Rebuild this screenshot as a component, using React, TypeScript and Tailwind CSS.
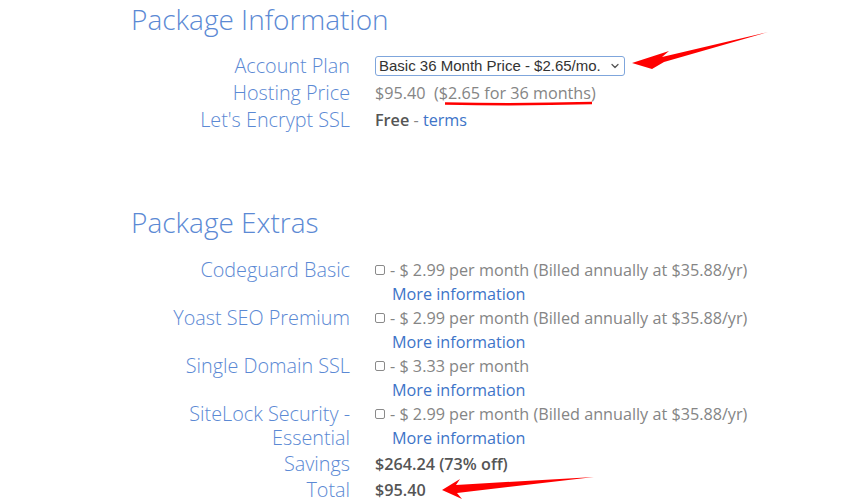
import { ChevronDown } from 'lucide-react';

const font = { fontFamily: '"Open Sans", "Noto Sans", sans-serif' };

type Extra = { label: string[]; price: string };

const extras: Extra[] = [
  { label: ['Codeguard Basic'], price: '- $ 2.99 per month (Billed annually at $35.88/yr)' },
  { label: ['Yoast SEO Premium'], price: '- $ 2.99 per month (Billed annually at $35.88/yr)' },
  { label: ['Single Domain SSL'], price: '- $ 3.33 per month' },
  { label: ['SiteLock Security -', 'Essential'], price: '- $ 2.99 per month (Billed annually at $35.88/yr)' },
];

function Label({ children, className = '' }: { children: React.ReactNode; className?: string }) {
  return (
    <div className={`text-right text-[19.8px] font-light leading-[24px] text-[#5b89d4] ${className}`}>{children}</div>
  );
}

function Checkbox() {
  return <span className="mr-[5px] inline-block h-[10px] w-[10px] rounded-[2px] border border-[#8a8a8a] align-[1px]" />;
}

export default function App() {
  return (
    <div className="relative h-[500px] w-[850px] overflow-hidden bg-white" style={font}>
      <h2 className="pl-[131px] pt-[1px] text-[28px] font-light leading-[36px] text-[#5b89d4]">Package Information</h2>

      <div className="mt-[17px] grid grid-cols-[350px_1fr] gap-x-[25px] gap-y-[3px]">
        <Label>Account Plan</Label>
        <div className="flex items-center">
          <div
            className="flex h-[20px] w-[250px] items-center justify-between gap-1 whitespace-nowrap rounded-[3px] border border-[#7fa6dc] pl-[3px] pr-[3px] text-[15px] text-[#333]"
            style={{ fontFamily: '"Liberation Sans", Arial, sans-serif' }}
          >
            <span>Basic 36 Month Price - $2.65/mo.</span>
            <ChevronDown size={12} strokeWidth={2.5} className="shrink-0 text-[#555]" />
          </div>
        </div>

        <Label>Hosting Price</Label>
        <div className="text-[16.2px] leading-[24px] text-[#858585]">
          $95.40&nbsp;&nbsp;($2.65 for 36 months)
        </div>

        <Label>Let's Encrypt SSL</Label>
        <div className="text-[16.2px] leading-[24px] text-[#858585]">
          <span className="font-semibold text-[#555]">Free</span> - <span className="text-[#3d74c8]">terms</span>
        </div>
      </div>

      <h2 className="mt-[72px] pl-[131px] text-[28px] font-light leading-[36px] text-[#5b89d4]">Package Extras</h2>

      <div className="mt-[18px] grid grid-cols-[350px_1fr] gap-x-[25px]">
        {extras.map((extra) => (
          <div key={extra.price + extra.label[0]} className="contents">
            <Label>
              {extra.label.map((line) => (
                <div key={line}>{line}</div>
              ))}
            </Label>
            <div className="text-[16.2px] leading-[24px] text-[#858585]">
              <div>
                <Checkbox />
                {extra.price}
              </div>
              <div className="pl-[17px] text-[#3d74c8]">More information</div>
            </div>
          </div>
        ))}

        <Label className="mt-[2px]">Savings</Label>
        <div className="mt-[2px] text-[16.2px] font-semibold leading-[24px] text-[#555]">$264.24 (73% off)</div>

        <Label className="mt-[2px]">Total</Label>
        <div className="mt-[2px] text-[16.2px] font-semibold leading-[24px] text-[#555]">$95.40</div>
      </div>

      <svg className="pointer-events-none absolute left-0 top-0" width="850" height="500">
        <path d="M632 63 L669 51 L662 57 L768 32 L664 62 L652 69 Z" fill="#f00" />
        <path d="M445 103.5 Q520 105 592 103" stroke="#f00" strokeWidth="2.5" fill="none" />
        <path d="M442 490 L460 479 L456 485 L594 477 L457 493 L462 499 Z" fill="#f00" />
      </svg>
    </div>
  );
}
